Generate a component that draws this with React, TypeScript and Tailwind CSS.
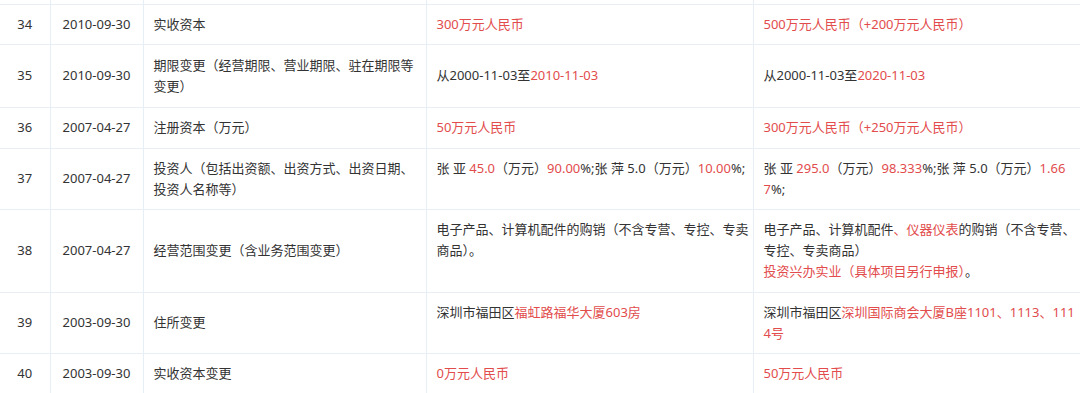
import React from "react";

type Seg = [string, boolean?];

interface ChangeRow {
  no: string;
  date: string;
  item: string[];
  before: Seg[][];
  after: Seg[][];
  height: string;
  beforeTop?: boolean;
}

// lines are split the way the source page wraps them
const rows: ChangeRow[] = [
  {
    no: "34",
    date: "2010-09-30",
    item: ["实收资本"],
    before: [[["300万元人民币", true]]],
    after: [[["500万元人民币（+200万元人民币）", true]]],
    height: "h-[40px]",
  },
  {
    no: "35",
    date: "2010-09-30",
    item: ["期限变更（经营期限、营业期限、驻在期限等", "变更）"],
    before: [[["从2000-11-03至"], ["2010-11-03", true]]],
    after: [[["从2000-11-03至"], ["2020-11-03", true]]],
    height: "h-[63px]",
  },
  {
    no: "36",
    date: "2007-04-27",
    item: ["注册资本（万元）"],
    before: [[["50万元人民币", true]]],
    after: [[["300万元人民币（+250万元人民币）", true]]],
    height: "h-[41px]",
  },
  {
    no: "37",
    date: "2007-04-27",
    item: ["投资人（包括出资额、出资方式、出资日期、", "投资人名称等）"],
    before: [
      [
        ["张 亚 "],
        ["45.0", true],
        ["（万元）"],
        ["90.00", true],
        ["%;张 萍 5.0（万元）"],
        ["10.00", true],
        ["%;"],
      ],
    ],
    after: [
      [
        ["张 亚 "],
        ["295.0", true],
        ["（万元）"],
        ["98.333", true],
        ["%;张 萍 5.0（万元）"],
        ["1.66", true],
      ],
      [["7", true], ["%;"]],
    ],
    height: "h-[61px]",
    beforeTop: true,
  },
  {
    no: "38",
    date: "2007-04-27",
    item: ["经营范围变更（含业务范围变更）"],
    before: [
      [["电子产品、计算机配件的购销（不含专营、专控、专卖"]],
      [["商品）。"]],
    ],
    after: [
      [
        ["电子产品、计算机配件"],
        ["、仪器仪表", true],
        ["的购销（不含专营、"],
      ],
      [["专控、专卖商品）"]],
      [["投资兴办实业（具体项目另行申报）", true], ["。"]],
    ],
    height: "h-[83px]",
    beforeTop: true,
  },
  {
    no: "39",
    date: "2003-09-30",
    item: ["住所变更"],
    before: [[["深圳市福田区"], ["福虹路福华大厦603房", true]]],
    after: [
      [["深圳市福田区"], ["深圳国际商会大厦B座1101、1113、111", true]],
      [["4号", true]],
    ],
    height: "h-[61px]",
    beforeTop: true,
  },
  {
    no: "40",
    date: "2003-09-30",
    item: ["实收资本变更"],
    before: [[["0万元人民币", true]]],
    after: [[["50万元人民币", true]]],
    height: "h-[41px]",
  },
];

function Content({ lines }: { lines: Seg[][] }) {
  return (
    <>
      {lines.map((line, i) => (
        <div key={i} className="whitespace-nowrap">
          {line.map(([text, red], j) => (
            <span key={j} className={red ? "text-[#e24c4c]" : undefined}>
              {text}
            </span>
          ))}
        </div>
      ))}
    </>
  );
}

const cell = "border-b border-r border-[#e8eef5] px-[10px] py-[9px]";

export default function App() {
  return (
    <div
      className="w-[1080px] h-[393px] overflow-hidden bg-white text-[13px] leading-[21px] text-[#333]"
      style={{ fontFamily: '"Noto Sans", "Noto Sans CJK SC", sans-serif' }}
    >
      <table className="table-fixed border-collapse w-[1085px]">
        <colgroup>
          <col className="w-[50px]" />
          <col className="w-[93px]" />
          <col className="w-[283px]" />
          <col className="w-[327px]" />
          <col className="w-[332px]" />
        </colgroup>
        <tbody>
          <tr className="h-[4px]">
            <td className="border-b border-r border-[#e8eef5]" />
            <td className="border-b border-r border-[#e8eef5]" />
            <td className="border-b border-r border-[#e8eef5]" />
            <td className="border-b border-r border-[#e8eef5]" />
            <td className="border-b border-[#e8eef5]" />
          </tr>
          {rows.map((row) => (
            <tr key={row.no} className={row.height}>
              <td className={`${cell} text-center align-middle`}>{row.no}</td>
              <td className={`${cell} text-center align-middle`}>{row.date}</td>
              <td className={`${cell} align-middle`}>
                {row.item.map((l, i) => (
                  <div key={i} className="whitespace-nowrap">
                    {l}
                  </div>
                ))}
              </td>
              <td
                className={`${cell} overflow-hidden ${
                  row.beforeTop ? "align-top" : "align-middle"
                }`}
              >
                <Content lines={row.before} />
              </td>
              <td className={`${cell} border-r-0 align-middle`}>
                <Content lines={row.after} />
              </td>
            </tr>
          ))}
        </tbody>
      </table>
    </div>
  );
}
